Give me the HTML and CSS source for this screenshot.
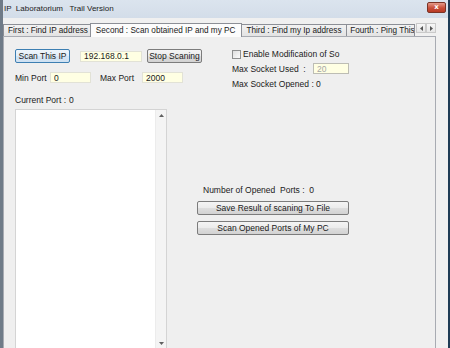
FILE: index.html
```html
<!DOCTYPE html>
<html lang="en">
<head>
    <meta charset="UTF-8">
    <meta name="viewport" content="width=device-width, initial-scale=1.0">
    <title>IP Laboratorium</title>
    <link rel="stylesheet" href="styles.css">
</head>
<body>
    <div class="window">
        <div class="titlebar">
            <span class="title">IP  Laboratorium   Trail Version</span>
            <button class="close-btn">x</button>
        </div>

        <div class="tabs">
            <div class="tab-strip">
                <div class="tab tab-first">First : Find IP address</div>
                <div class="tab active">Second : Scan obtained IP and my PC</div>
                <div class="tab tab-third">Third : Find my Ip address</div>
                <div class="tab tab-fourth">Fourth : Ping This IP</div>
                <div class="tab-arrows">
                    <span class="arrow-btn">
                        <svg width="3" height="5" viewBox="0 0 3 5"><path d="M3 0 L0 2.5 L3 5 Z" fill="#555"/></svg>
                    </span>
                    <span class="arrow-btn">
                        <svg width="3" height="5" viewBox="0 0 3 5"><path d="M0 0 L3 2.5 L0 5 Z" fill="#555"/></svg>
                    </span>
                </div>
            </div>

            <div class="tab-page">
                <div class="top">
                    <div class="left-col">
                        <div class="row row-scan">
                            <button class="btn btn-focus btn-scan">Scan This IP</button>
                            <input class="field field-ip" type="text" value="192.168.0.1">
                            <button class="btn btn-stop">Stop Scaning</button>
                        </div>
                        <div class="row row-ports">
                            <span class="lbl lbl-min">Min Port</span>
                            <input class="field field-port" type="text" value="0">
                            <span class="lbl lbl-max">Max Port</span>
                            <input class="field field-port" type="text" value="2000">
                        </div>
                        <div class="row row-current">
                            <span class="lbl lbl-current">Current Port :</span>
                            <span class="lbl">0</span>
                        </div>
                    </div>

                    <div class="right-col">
                        <label class="check-row">
                            <span class="checkbox"></span>
                            <span class="lbl">Enable Modification of So</span>
                        </label>
                        <div class="row row-socket">
                            <span class="lbl lbl-socket">Max Socket Used  :</span>
                            <input class="field field-socket" type="text" value="20" disabled>
                        </div>
                        <div class="row row-opened">
                            <span class="lbl">Max Socket Opened : 0</span>
                        </div>
                    </div>
                </div>

                <div class="bottom">
                    <div class="log">
                        <div class="log-body"></div>
                        <div class="vscroll">
                            <svg width="5" height="3" viewBox="0 0 5 3"><path d="M0 3 L2.5 0 L5 3 Z" fill="#606060"/></svg>
                            <svg width="5" height="3" viewBox="0 0 5 3"><path d="M0 0 L2.5 3 L5 0 Z" fill="#606060"/></svg>
                        </div>
                    </div>

                    <div class="mid-col">
                        <div class="lbl opened-count">Number of Opened  Ports :  0</div>
                        <button class="btn btn-wide">Save Result of scaning To File</button>
                        <button class="btn btn-wide">Scan Opened Ports of My PC</button>
                    </div>
                </div>
            </div>
        </div>
    </div>
</body>
</html>
```

FILE: styles.css
```css
 *{
     margin: 0;
     padding: 0;
     box-sizing: border-box;
 }

 body{
     font-family: 'Liberation Sans', Arial, sans-serif;
     font-size: 8.5px;
     color: #1a1a1a;
     background: #f0f0f0;
 }

 .window{
     width: 450px;
     height: 348px;
     overflow: hidden;
     background: #f0f0f0;
     border-left: 3px solid #6f7b88;
     border-right: 2px solid #1f3c55;
 }

 .titlebar{
     height: 18px;
     display: flex;
     align-items: center;
     justify-content: space-between;
     background: linear-gradient(#dbe4ee, #d3dde9);
     margin-left: -3px;
     padding-left: 4px;
     padding-right: 2px;
 }

 .title{
     white-space: pre;
     font-size: 8px;
     color: #1c1c1c;
     margin-top: -2px;
 }

 .close-btn{
     width: 19px;
     height: 11px;
     margin-top: -4px;
     border: 1px solid #7a3326;
     border-radius: 2px;
     background: linear-gradient(#e49a8a, #c94f3a 55%, #b83a24);
     color: #fff;
     font-family: 'DejaVu Sans', sans-serif;
     font-weight: bold;
     font-size: 7px;
     line-height: 8px;
 }

 .tabs{
     width: 433px;
 }

 .tab-strip{
     height: 18px;
     display: flex;
     align-items: flex-end;
     white-space: nowrap;
 }

 .tab{
     height: 12px;
     line-height: 11px;
     font-size: 8.2px;
     padding-left: 4px;
     border: 1px solid #8c8f96;
     border-bottom: none;
     border-right: none;
     background: linear-gradient(#f2f2f2, #e3e3e3);
     overflow: hidden;
 }

 .tab-first{
     width: 87px;
 }

 .tab.active{
     width: 153px;
     height: 14px;
     line-height: 14px;
     padding-left: 5px;
     background: #fcfcfc;
     border-right: 1px solid #8c8f96;
     margin-bottom: -1px;
     position: relative;
 }

 .tab-third{
     width: 104px;
     border-left: none;
 }

 .tab-fourth{
     width: 69px;
     border-right: 1px solid #8c8f96;
     padding-left: 3px;
 }

 .tab-arrows{
     display: flex;
     margin-left: 1px;
     margin-bottom: 3px;
 }

 .arrow-btn{
     width: 10px;
     height: 10px;
     display: flex;
     align-items: center;
     justify-content: center;
     border: 1px solid #c9c9c9;
     background: linear-gradient(#f7f7f7, #e6e6e6);
 }

 .tab-page{
     height: 340px;
     border: 1px solid #a8abb2;
     background: #efefef;
     padding: 12px 0 0 11px;
 }

 .top{
     display: flex;
 }

 .left-col{
     width: 217px;
 }

 .row{
     display: flex;
     align-items: center;
 }

 .lbl{
     white-space: pre;
 }

 .btn{
     font-family: inherit;
     font-size: 8.5px;
     color: #1a1a1a;
     height: 14px;
     border: 1px solid #7c7c7c;
     border-radius: 2px;
     background: linear-gradient(#f4f4f4 0%, #ebebeb 50%, #dedede 51%, #d2d2d2 100%);
 }

 .btn-focus{
     border-color: #3d7fb2;
     background: linear-gradient(#eef5fb 0%, #e4eef8 50%, #d5e6f5 51%, #cfe1f2 100%);
 }

 .btn-scan{
     width: 55px;
 }

 .btn-stop{
     width: 55px;
     margin-left: 5px;
 }

 .field{
     font-family: inherit;
     font-size: 8.5px;
     color: #1a1a1a;
     height: 11px;
     padding: 0 0 0 3px;
     border: 1px solid #e2e2d6;
     background: #ffffe3;
     outline: none;
 }

 .field-ip{
     width: 62px;
     margin-left: 10px;
 }

 .row-scan{
     height: 14px;
 }

 .row-ports{
     margin-top: 9px;
     height: 11px;
 }

 .lbl-min{
     width: 35px;
 }

 .field-port{
     width: 41px;
 }

 .lbl-max{
     width: 42px;
     margin-left: 9px;
 }

 .row-current{
     margin-top: 12px;
     height: 10px;
 }

 .lbl-current{
     width: 54px;
 }

 .right-col{
     padding-top: 1px;
 }

 .check-row{
     display: flex;
     align-items: center;
     height: 8px;
 }

 .checkbox{
     width: 9px;
     height: 9px;
     border: 1px solid #8e8f8f;
     background: linear-gradient(135deg, #dedede, #fbfbfb);
     margin-right: 2px;
 }

 .row-socket{
     margin-top: 5px;
     height: 11px;
 }

 .lbl-socket{
     width: 81px;
 }

 .field-socket{
     width: 36px;
     color: #a6a6a6;
     border-color: #bdbdb4;
 }

 .row-opened{
     margin-top: 5px;
     height: 9px;
 }

 .bottom{
     display: flex;
     margin-top: 4px;
 }

 .log{
     width: 152px;
     height: 240px;
     display: flex;
     border: 1px solid #d4d4d4;
     background: #fff;
 }

 .log-body{
     flex: 1;
 }

 .vscroll{
     width: 11px;
     display: flex;
     flex-direction: column;
     align-items: center;
     justify-content: space-between;
     padding: 4px 0 3px;
     background: #f4f4f4;
     border-left: 1px solid #ececec;
 }

 .mid-col{
     margin-left: 30px;
     padding-top: 77px;
     display: flex;
     flex-direction: column;
 }

 .opened-count{
     height: 9px;
     line-height: 9px;
     margin-left: 6px;
 }

 .btn-wide{
     width: 152px;
     margin-top: 6px;
 }
```
